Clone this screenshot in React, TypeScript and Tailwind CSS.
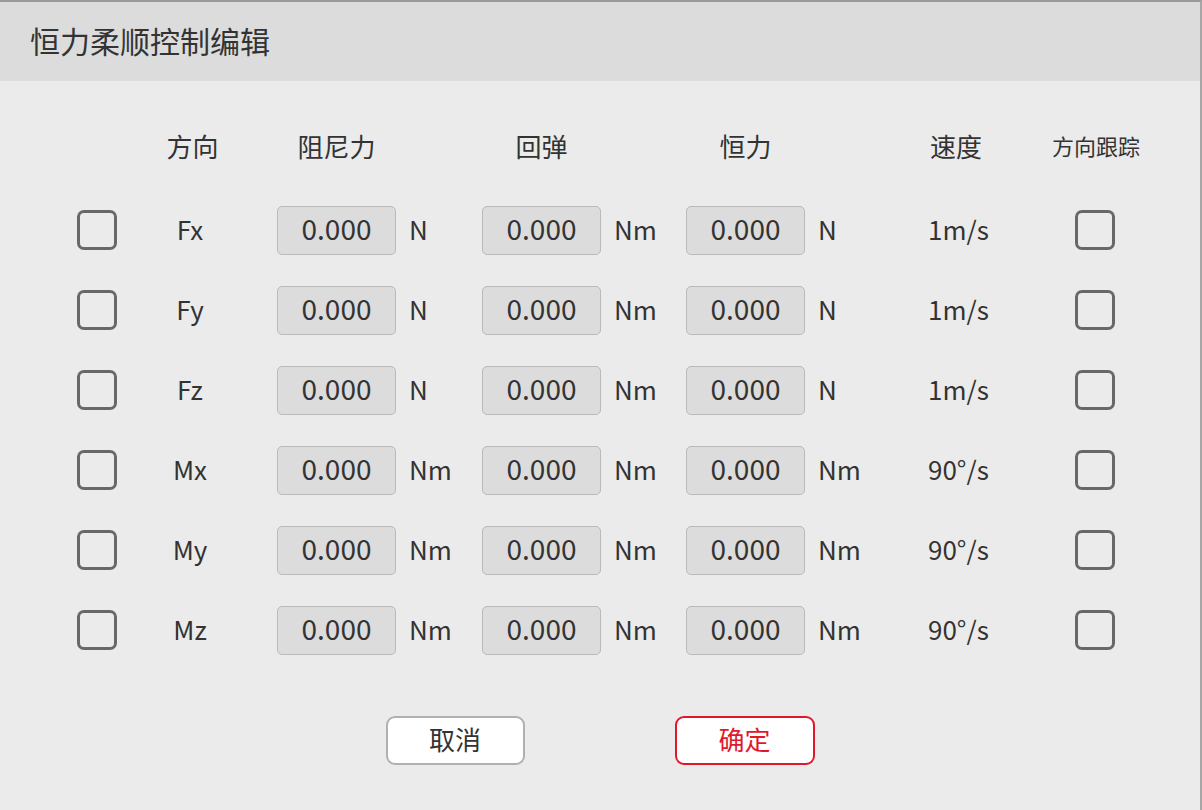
import React from "react";

const rows = [
  { dir: "Fx", u1: "N", u2: "Nm", u3: "N", speed: "1m/s" },
  { dir: "Fy", u1: "N", u2: "Nm", u3: "N", speed: "1m/s" },
  { dir: "Fz", u1: "N", u2: "Nm", u3: "N", speed: "1m/s" },
  { dir: "Mx", u1: "Nm", u2: "Nm", u3: "Nm", speed: "90°/s" },
  { dir: "My", u1: "Nm", u2: "Nm", u3: "Nm", speed: "90°/s" },
  { dir: "Mz", u1: "Nm", u2: "Nm", u3: "Nm", speed: "90°/s" },
];

const font = { fontFamily: '"Noto Sans CJK SC", "Noto Sans", sans-serif' };

function Box() {
  return <div className="w-[40px] h-[40px] rounded-[7px] border-[3px] border-[#686868] box-border" />;
}

function Field({ unit }: { unit: string }) {
  return (
    <div className="flex items-center">
      <div className="w-[119px] h-[49px] rounded-[5px] border-[1.5px] border-[#bababa] bg-[#dcdcdc] flex items-center justify-center text-[28px] text-[#333]">
        <span className="-translate-y-[2px]">0.000</span>
      </div>
      <span className="ml-[13px] text-[26px] text-[#333] -translate-y-[2px]">{unit}</span>
    </div>
  );
}

const cols = "grid grid-cols-[39px_161px_205px_204px_242px_147px_39px] items-center";

export default function App() {
  return (
    <div style={font} className="w-[1202px] h-[810px] bg-[#ebebeb] border-t-2 border-r-2 border-t-[#9a9a9a] border-r-[#a6a6a6] box-border flex flex-col text-[#333]">
      <div className="h-[79px] bg-[#dcdcdc] flex items-center pl-[30px] shrink-0">
        <span className="text-[30px] leading-none text-[#333] -translate-y-[2px]">恒力柔顺控制编辑</span>
      </div>
      <div className="pl-[77px] pt-[29px]">
        <div className={`${cols} h-[80px] -translate-y-[5px]`}>
          <div />
          <div className="text-center pr-[8px] text-[26px]">方向</div>
          <div className="w-[119px] text-center text-[26px]">阻尼力</div>
          <div className="w-[119px] text-center text-[26px]">回弹</div>
          <div className="w-[119px] text-center text-[26px]">恒力</div>
          <div className="pl-[2px] text-[26px]">速度</div>
          <div className="flex justify-center">
            <span className="whitespace-nowrap text-[22px] ml-[3px]">方向跟踪</span>
          </div>
        </div>
        {rows.map((r) => (
          <div key={r.dir} className={`${cols} h-[80px]`}>
            <Box />
            <div className="text-center pr-[13px] text-[26px] -translate-y-[2px]">{r.dir}</div>
            <Field unit={r.u1} />
            <Field unit={r.u2} />
            <Field unit={r.u3} />
            <div className="text-[26px] whitespace-nowrap -translate-y-[2px]">{r.speed}</div>
            <Box />
          </div>
        ))}
      </div>
      <div className="flex justify-center gap-[150px] mt-[46px]">
        <button className="w-[139px] h-[49px] rounded-[9px] border-2 border-[#b0b0b0] bg-white text-[26px] text-[#333] flex items-center justify-center">
          <span className="-translate-y-[2px]">取消</span>
        </button>
        <button className="w-[140px] h-[49px] rounded-[9px] border-2 border-[#e0192a] bg-white text-[26px] text-[#e0192a] flex items-center justify-center">
          <span className="-translate-y-[2px]">确定</span>
        </button>
      </div>
    </div>
  );
}
